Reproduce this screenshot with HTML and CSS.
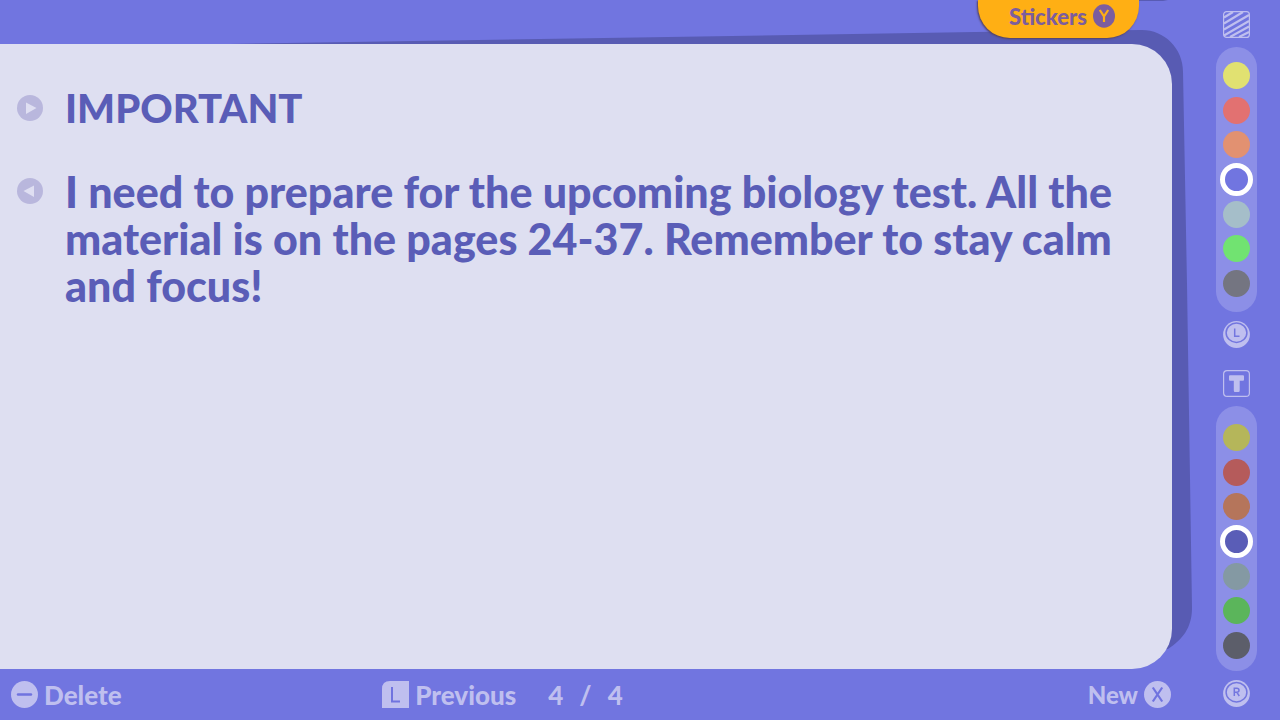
FILE: index.html
```html
<!DOCTYPE html>
<html lang="en">
<head>
<meta charset="utf-8">
<title>Notes</title>
<link rel="stylesheet" href="styles.css">
</head>
<body>
<div class="app">
  <div class="stage">
    <button class="stickers" type="button">Stickers
      <svg class="stickers-key" viewBox="0 0 22 24" aria-hidden="true"><ellipse cx="11" cy="12" rx="11" ry="11.8" fill="#7c5d9f"/><path d="M6.8 6 11 12.4 15.2 6M11 12.4V18" fill="none" stroke="#ffaf14" stroke-width="2.2"/></svg>
    </button>
    <main class="sheet">
      <svg class="backdrop" viewBox="0 0 1192 625" preserveAspectRatio="none" aria-hidden="true"><path d="M230 0 L975 -12 L1142 -14 C1164 -14 1183 4 1183 28 L1187 240 L1192 564 C1192 584 1182 596 1168 605 L1100 610 L230 300 Z" fill="#585bb3"/><path d="M1138 -44H1168L1163 -43H1138Z" fill="#585bb3"/></svg>
      <article class="note">
        <button class="marker" type="button" aria-label="Expand title"><svg viewBox="0 0 26 26"><circle cx="13" cy="13" r="13" fill="#b9b7dd"/><path d="M9 7.5 19.5 13 9 19Z" fill="#dfdff2"/></svg></button>
        <h1 class="title">IMPORTANT</h1>
        <button class="marker" type="button" aria-label="Collapse text"><svg viewBox="0 0 26 26"><circle cx="13" cy="13" r="13" fill="#b9b7dd"/><path d="M17 7.5 6.5 13 17 19Z" fill="#dfdff2"/></svg></button>
        <p class="text">I need to prepare for the upcoming biology test. All the<br>material is on the pages 24-37. Remember to stay calm<br>and focus!</p>
      </article>
    </main>
    <footer class="actions">
      <button class="action" type="button"><svg class="key" viewBox="0 0 27 27" aria-hidden="true"><circle cx="13.5" cy="13.5" r="13.5" fill="#bfbfef"/><path d="M7 13.5H20" stroke="#7073df" stroke-width="2.4" stroke-linecap="round"/></svg>Delete</button>
      <div class="pager">
        <button class="action" type="button"><svg class="key" viewBox="0 0 27 27" aria-hidden="true"><path d="M8 0H27V27H0V8Q0 0 8 0Z" fill="#bfbfef"/><path d="M10 6V20.5H18" fill="none" stroke="#7073df" stroke-width="2"/></svg>Previous</button>
        <span class="count"><span>4</span><span>/</span><span>4</span></span>
      </div>
      <button class="action action-new" type="button">New<svg class="key" viewBox="0 0 27 27" aria-hidden="true"><circle cx="13.5" cy="13.5" r="13.5" fill="#bfbfef"/><path d="M8.8 6.5 18.2 20.5M18.2 6.5 8.8 20.5" stroke="#7073df" stroke-width="2.2"/></svg></button>
    </footer>
  </div>
  <aside class="rail">
    <section class="group" aria-label="Paper colour">
      <svg class="icon" viewBox="0 0 27 27" aria-hidden="true"><rect x=".6" y=".6" width="25.8" height="25.8" rx="3" fill="none" stroke="#bfbfef" stroke-width="1.2"/><path d="M1 6.5 10 1M1 12.5 20 1M1 18.5 26 4M1 24.5 26 10M7 26 26 15.5M16 26 26 21" stroke="#bfbfef" stroke-width="2.1"/></svg>
      <div class="palette">
        <input class="swatch yellow" type="radio" name="paper" aria-label="Yellow">
        <input class="swatch red" type="radio" name="paper" aria-label="Red">
        <input class="swatch orange" type="radio" name="paper" aria-label="Orange">
        <input class="swatch violet" type="radio" name="paper" aria-label="Violet" checked>
        <input class="swatch teal" type="radio" name="paper" aria-label="Teal">
        <input class="swatch green" type="radio" name="paper" aria-label="Green">
        <input class="swatch gray" type="radio" name="paper" aria-label="Gray">
      </div>
      <svg class="icon" viewBox="0 0 27 27" aria-hidden="true"><circle cx="13.5" cy="13.5" r="13.4" fill="#bfbfef"/><ellipse cx="13.5" cy="11.7" rx="10.4" ry="9.7" fill="none" stroke="#7376df" stroke-width="1.5"/><path d="M11.7 7.5V15.2H16.5" fill="none" stroke="#7376df" stroke-width="1.5"/></svg>
    </section>
    <section class="group" aria-label="Text colour">
      <svg class="icon" viewBox="0 0 27 27" aria-hidden="true"><rect x=".6" y=".6" width="25.8" height="25.8" rx="3.5" fill="none" stroke="#bfbfef" stroke-width="1.2"/><path d="M7 5.3H20Q21 5.3 21 6.3V9.5Q21 10.8 20 10.8H16.7V20.5Q16.7 22 15.5 22H12Q10.8 22 10.8 20.5V10.8H7Q6 10.8 6 9.5V6.3Q6 5.3 7 5.3Z" fill="#bfbfef"/></svg>
      <div class="palette dark">
        <input class="swatch yellow" type="radio" name="ink" aria-label="Yellow">
        <input class="swatch red" type="radio" name="ink" aria-label="Red">
        <input class="swatch orange" type="radio" name="ink" aria-label="Orange">
        <input class="swatch violet" type="radio" name="ink" aria-label="Violet" checked>
        <input class="swatch teal" type="radio" name="ink" aria-label="Teal">
        <input class="swatch green" type="radio" name="ink" aria-label="Green">
        <input class="swatch gray" type="radio" name="ink" aria-label="Gray">
      </div>
      <svg class="icon" viewBox="0 0 27 27" aria-hidden="true"><circle cx="13.5" cy="13.5" r="13.4" fill="#bfbfef"/><ellipse cx="13.5" cy="12.2" rx="10.4" ry="9.7" fill="none" stroke="#7376df" stroke-width="1.5"/><path d="M11.3 16V8.2H13.7Q16 8.2 16 10.2T13.7 12.2H11.3M13.7 12.2 16.3 16" fill="none" stroke="#7376df" stroke-width="1.5"/></svg>
    </section>
  </aside>
</div>
</body>
</html>
```
FILE: styles.css
```css
* { box-sizing: border-box; }

body {
  margin: 0;
  background: #7175e0;
  color: #5a5db7;
  font-family: Lato, "Open Sans", sans-serif;
  font-weight: 900;
}

button {
  padding: 0;
  border: 0;
  background: none;
  color: inherit;
  font: inherit;
  cursor: pointer;
}

svg { display: block; }

.app {
  display: flex;
  min-height: 100vh;
}

.stage {
  position: relative;
  flex: 1;
  display: flex;
  flex-direction: column;
  padding-top: 44px;
}

.sheet {
  position: relative;
  flex: 1;
  display: flex;
}

.backdrop {
  position: absolute;
  top: 0;
  left: 0;
  width: calc(100% + 20px);
  height: 100%;
  overflow: visible;
}

.note {
  position: relative;
  flex: 1;
  display: grid;
  grid-template-columns: 26px 1fr;
  grid-template-rows: auto 1fr;
  column-gap: 22px;
  row-gap: 36px;
  padding: 41px 24px 24px 17px;
  border-radius: 0 40px 40px 0;
  background: #dedff1;
}

.marker {
  align-self: start;
  width: 26px;
  margin-top: 10px;
}

.title,
.text {
  margin: 0;
  font-weight: 900;
  line-height: 47px;
}

.title { font-size: 40px; }

.text { font-size: 43px; }

.stickers {
  position: absolute;
  z-index: 1;
  top: 0;
  right: 33px;
  display: flex;
  align-items: center;
  gap: 6px;
  height: 38px;
  padding: 0 24px 6px 31px;
  border-radius: 0 0 32px 32px;
  background: #ffaf14;
  box-shadow: -1px 1px 2px #54425f;
  color: #7c5d9f;
  font-size: 22px;
}

.stickers-key { width: 22px; }

.actions {
  display: grid;
  grid-template-columns: 32% 1fr auto;
  align-items: center;
  height: 51px;
  padding: 0 1px 0 11px;
  color: #bfbfef;
  font-size: 26px;
}

.action {
  display: flex;
  align-items: center;
  gap: 6px;
}

.action-new { font-size: 24px; }

.key { width: 27px; }

.pager {
  display: flex;
  align-items: center;
  gap: 32px;
}

.count {
  display: flex;
  gap: 16px;
}

.rail {
  display: flex;
  flex-direction: column;
  gap: 22px;
  padding: 11px 23px 12px 44px;
}

.group {
  display: flex;
  flex-direction: column;
  align-items: center;
  gap: 9px;
}

.icon { width: 27px; }

.palette {
  display: flex;
  flex-direction: column;
  align-items: center;
  justify-content: space-between;
  width: 41px;
  height: 265px;
  padding: 15px 0;
  border-radius: 21px;
  background: #8c8fe7;
}

.palette.dark { padding: 18px 0 12px; }

.swatch {
  appearance: none;
  width: 27px;
  height: 27px;
  margin: 0;
  border-radius: 50%;
}

.swatch:checked {
  width: 33px;
  height: 33px;
  margin: -3px 0;
  border: 5px solid #fff;
}

.yellow { background: #e1e171; }
.red { background: #e27171; }
.orange { background: #e29171; }
.violet { background: #7175e0; }
.teal { background: #a5bec9; }
.green { background: #71e371; }
.gray { background: #747581; }

.dark .yellow { background: #b5b65a; }
.dark .red { background: #b55b5b; }
.dark .orange { background: #b5755b; }
.dark .violet { background: #5a5db7; }
.dark .teal { background: #8499a3; }
.dark .green { background: #5bb55b; }
.dark .gray { background: #5c5e6a; }
```
